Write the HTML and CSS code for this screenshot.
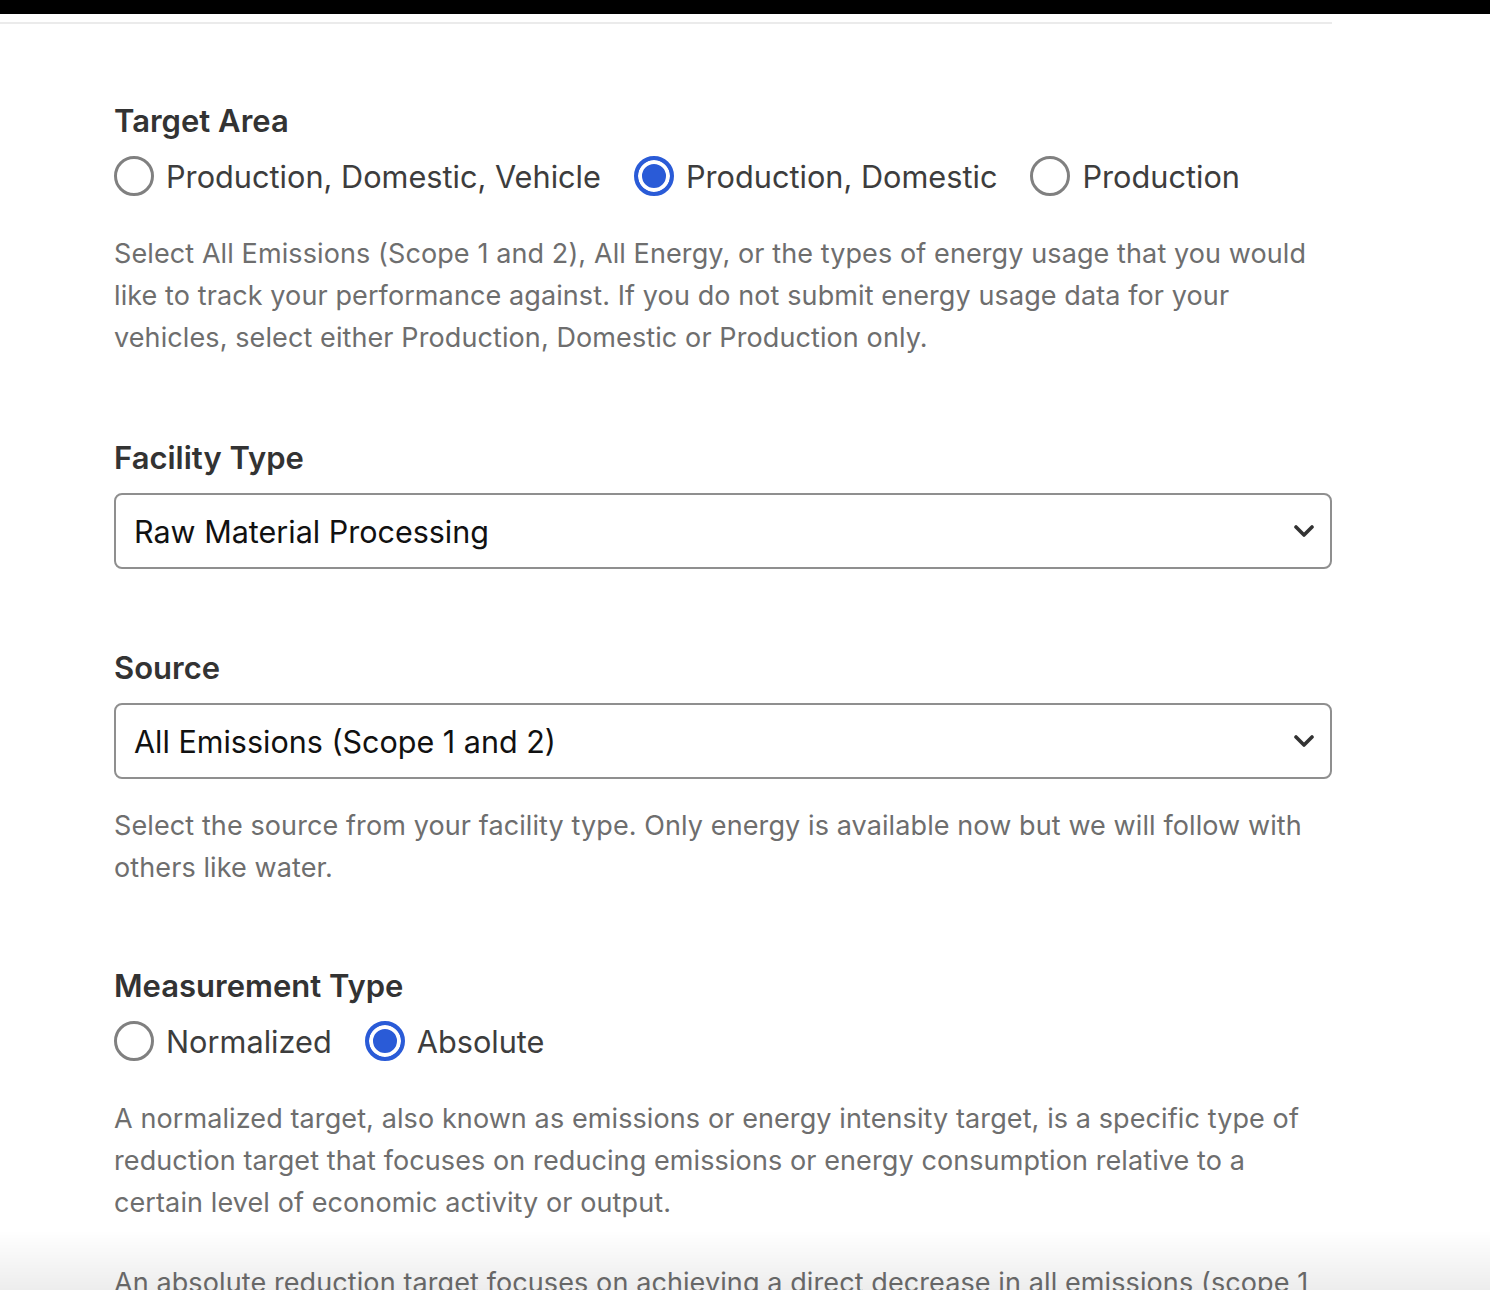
FILE: index.html
```html
<!DOCTYPE html>
<html>
<head>
    <title>Reduction Target</title>
    <link rel="stylesheet" href="styles.css">
</head>
<body>
    <div class="topbar"></div>

    <div class="page">
        <form class="target-form">
            <div class="field">
                <div class="field-label">Target Area</div>
                <div class="radio-row">
                    <label class="radio"><input type="radio" name="area" value="pdv"> Production, Domestic, Vehicle</label>
                    <label class="radio"><input type="radio" name="area" value="pd" checked> Production, Domestic</label>
                    <label class="radio"><input type="radio" name="area" value="p"> Production</label>
                </div>
                <p class="hint hint-after-radio">Select All Emissions (Scope 1 and 2), All Energy, or the types of energy usage that you would like to track your performance against. If you do not submit energy usage data for your vehicles, select either Production, Domestic or Production only.</p>
            </div>

            <div class="field">
                <div class="field-label">Facility Type</div>
                <div class="select-wrap">
                    <select class="select">
                        <option>Raw Material Processing</option>
                        <option>Manufacturing</option>
                        <option>Warehouse</option>
                    </select>
                    <svg class="chevron" width="20" height="12" viewBox="0 0 20 12"><path d="M2 2l8 8 8-8" fill="none" stroke="#333" stroke-width="3.6" stroke-linecap="round" stroke-linejoin="round"/></svg>
                </div>
            </div>

            <div class="field field-tight">
                <div class="field-label">Source</div>
                <div class="select-wrap">
                    <select class="select">
                        <option>All Emissions (Scope 1 and 2)</option>
                        <option>All Energy</option>
                    </select>
                    <svg class="chevron" width="20" height="12" viewBox="0 0 20 12"><path d="M2 2l8 8 8-8" fill="none" stroke="#333" stroke-width="3.6" stroke-linecap="round" stroke-linejoin="round"/></svg>
                </div>
                <p class="hint hint-after-select">Select the source from your facility type. Only energy is available now but we will follow with others like water.</p>
            </div>

            <div class="field">
                <div class="field-label">Measurement Type</div>
                <div class="radio-row">
                    <label class="radio"><input type="radio" name="measure" value="normalized"> Normalized</label>
                    <label class="radio"><input type="radio" name="measure" value="absolute" checked> Absolute</label>
                </div>
                <p class="hint hint-after-radio">A normalized target, also known as emissions or energy intensity target, is a specific type of reduction target that focuses on reducing emissions or energy consumption relative to a certain level of economic activity or output.</p>
                <p class="hint hint-para">An absolute reduction target focuses on achieving a direct decrease in all emissions (scope 1 and 2) or energy consumption, regardless of changes in production or economic activity.</p>
            </div>
        </form>
    </div>

    <div class="bottom-fade"></div>
</body>
</html>
```

FILE: styles.css
```css
body {
    margin: 0;
    padding: 0;
    background-color: #fff;
    font-family: Inter, "Noto Sans", sans-serif;
}

.topbar {
    height: 14px;
    background-color: #000;
}

.page {
    width: 1332px;
    margin-top: 8px;
    border-top: 2px solid #ebebeb;
}

.target-form {
    padding: 79px 0 0 114px;
}

.field {
    margin-bottom: 81px;
}

.field-tight {
    margin-bottom: 79px;
}

.field-label {
    font-size: 31px;
    line-height: 36px;
    font-weight: 600;
    color: #333;
    margin-bottom: 17px;
}

.radio-row {
    display: flex;
    align-items: center;
    gap: 33px;
    height: 40px;
}

.radio {
    display: flex;
    align-items: center;
    gap: 12px;
    font-size: 30.7px;
    color: #3d3d3d;
    cursor: pointer;
}

.radio input {
    appearance: none;
    -webkit-appearance: none;
    margin: 0;
    width: 40px;
    height: 40px;
    border: 3px solid #808080;
    border-radius: 50%;
    box-sizing: border-box;
    background-color: #fff;
}

.radio input:checked {
    border: 4px solid #2a5bd7;
    background-color: #2a5bd7;
    box-shadow: inset 0 0 0 4px #fff;
}

.hint {
    margin: 0;
    font-size: 27px;
    letter-spacing: 0.1px;
    line-height: 42px;
    color: #6e6e6e;
}

.hint-after-radio {
    margin-top: 37px;
}

.hint-after-select {
    margin-top: 26px;
}

.hint-para {
    margin-top: 38px;
}

.select-wrap {
    position: relative;
    margin-top: 1px;
}

.select {
    appearance: none;
    -webkit-appearance: none;
    display: block;
    width: 100%;
    height: 76px;
    padding: 0 60px 0 18px;
    border: 2px solid #8f8f8f;
    border-radius: 8px;
    background-color: #fff;
    font-family: Inter, "Noto Sans", sans-serif;
    font-size: 30.5px;
    color: #111;
    box-sizing: border-box;
}

.chevron {
    position: absolute;
    right: 18px;
    top: 32px;
    pointer-events: none;
}

.bottom-fade {
    position: fixed;
    left: 0;
    right: 0;
    bottom: 0;
    height: 60px;
    background: linear-gradient(rgba(0, 0, 0, 0), rgba(0, 0, 0, 0.07));
    pointer-events: none;
}
```
